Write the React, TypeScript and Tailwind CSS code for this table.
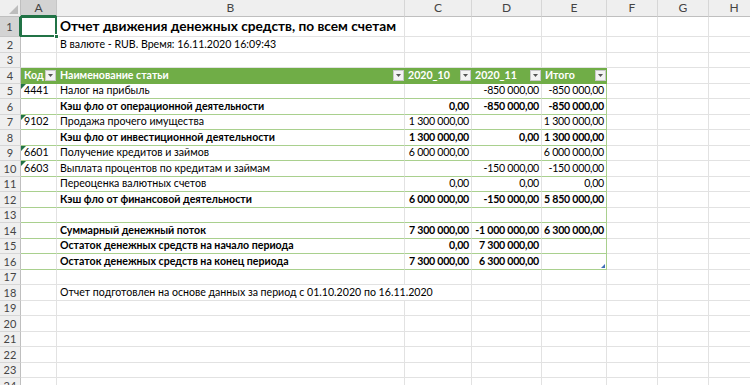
const cols = [
  "w-[36px]",
  "w-[348px]",
  "w-[67px]",
  "w-[70px]",
  "w-[65px]",
  "w-[51px]",
  "w-[51px]",
  "w-[51px]",
];
const letters = ["A", "B", "C", "D", "E", "F", "G", "H"];

interface Line {
  code?: string;
  name?: string;
  c?: string;
  d?: string;
  e?: string;
  bold?: boolean;
}

const lines: Line[] = [
  { code: "4441", name: "Налог на прибыль", d: "-850 000,00", e: "-850 000,00" },
  { name: "Кэш фло от операционной деятельности", c: "0,00", d: "-850 000,00", e: "-850 000,00", bold: true },
  { code: "9102", name: "Продажа прочего имущества", c: "1 300 000,00", e: "1 300 000,00" },
  { name: "Кэш фло от инвестиционной деятельности", c: "1 300 000,00", d: "0,00", e: "1 300 000,00", bold: true },
  { code: "6601", name: "Получение кредитов и займов", c: "6 000 000,00", e: "6 000 000,00" },
  { code: "6603", name: "Выплата процентов по кредитам и займам", d: "-150 000,00", e: "-150 000,00" },
  { name: "Переоценка валютных счетов", c: "0,00", d: "0,00", e: "0,00" },
  { name: "Кэш фло от финансовой деятельности", c: "6 000 000,00", d: "-150 000,00", e: "5 850 000,00", bold: true },
  {},
  { name: "Суммарный денежный поток", c: "7 300 000,00", d: "-1 000 000,00", e: "6 300 000,00", bold: true },
  { name: "Остаток денежных средств на начало периода", c: "0,00", d: "7 300 000,00", bold: true },
  { name: "Остаток денежных средств на конец периода", c: "7 300 000,00", d: "6 300 000,00", bold: true },
];

const RowHead = ({ n, active }: { n: number; active?: boolean }) => (
  <div
    className={
      "w-[21px] shrink-0 flex items-center justify-center border-b border-r text-[11px] text-[#444] " +
      (active
        ? "bg-[#d3d3d3] border-b-[#c6c6c6] border-r-[#217346] border-r-2"
        : "bg-[#efefef] border-b-[#d6d6d6] border-r-[#bfbfbf]")
    }
  >
    {n}
  </div>
);

const Filter = () => (
  <div className="absolute right-[1px] top-[2px] w-[11px] h-[11px] bg-[#f3f3f3] border border-[#c8c8c8] flex items-center justify-center">
    <svg width="5" height="3" viewBox="0 0 5 3">
      <path d="M0 0H5L2.5 3Z" fill="#555" />
    </svg>
  </div>
);

const Tri = () => (
  <div className="absolute left-0 top-0 w-0 h-0 border-t-[5px] border-t-[#217346] border-r-[5px] border-r-transparent" />
);

const Plain = ({ n, h, children }: { n: number; h: string; children?: React.ReactNode[] }) => (
  <div className={"flex " + h}>
    <RowHead n={n} />
    {cols.map((w, i) => (
      <div key={i} className={w + " shrink-0 border-r border-b border-[#e2e2e2] relative"}>
        {children?.[i]}
      </div>
    ))}
  </div>
);

const num = (v?: string, bold?: boolean) => (
  <div
    className={
      "absolute inset-0 flex items-center justify-end pr-[2px] whitespace-nowrap tracking-[-0.25px] " +
      (bold ? "font-bold" : "")
    }
  >
    {v}
  </div>
);

const App = () => {
  return (
    <div
      className="w-[750px] h-[385px] overflow-hidden bg-white text-[10.6px] text-black leading-none"
      style={{ fontFamily: "Lato, 'Liberation Sans', sans-serif" }}
    >
      {/* column headers */}
      <div className="flex h-[17px]">
        <div className="w-[21px] shrink-0 bg-[#efefef] border-r border-b border-[#bfbfbf] relative">
          <div className="absolute right-[2px] bottom-[2px] w-0 h-0 border-l-[9px] border-l-transparent border-b-[9px] border-b-[#bdbdbd]" />
        </div>
        {cols.map((w, i) => (
          <div
            key={i}
            className={
              w +
              " shrink-0 flex items-center justify-center text-[12px] text-[#444] border-r " +
              (i === 0
                ? "bg-[#d3d3d3] border-r-[#c6c6c6] border-b-2 border-b-[#217346]"
                : "bg-[#efefef] border-r-[#d6d6d6] border-b border-b-[#bfbfbf]")
            }
          >
            {letters[i]}
          </div>
        ))}
      </div>

      {/* row 1 */}
      <div className="flex h-[20px]">
        <RowHead n={1} active />
        {cols.map((w, i) => (
          <div key={i} className={w + " shrink-0 border-r border-b border-[#e2e2e2] relative"}>
            {i === 0 && (
              <div className="absolute -left-[1px] -top-[1px] w-[37px] h-[21px] border-2 border-[#217346] z-10">
                <div className="absolute -right-[4px] -bottom-[4px] w-[5px] h-[5px] bg-[#217346] border border-white" />
              </div>
            )}
            {i === 1 && (
              <div className="absolute left-[3px] bottom-[3px] whitespace-nowrap text-[13.7px] font-bold">
                Отчет движения денежных средств, по всем счетам
              </div>
            )}
          </div>
        ))}
      </div>

      <Plain n={2} h="h-[15.5px]">
        {[null, <div key="b" className="absolute left-[3px] inset-y-0 flex items-center whitespace-nowrap">В валюте - RUB. Время: 16.11.2020 16:09:43</div>]}
      </Plain>
      <Plain n={3} h="h-[15.5px]" />

      {/* table header */}
      <div className="flex h-[15.5px]">
        <RowHead n={4} />
        {["Код", "Наименование статьи", "2020_10", "2020_11", "Итого"].map((t, i) => (
          <div
            key={i}
            className={cols[i] + " shrink-0 bg-[#70ad47] text-white font-bold relative flex items-center pl-[3px] border-b border-[#70ad47]"}
          >
            {t}
            <Filter />
          </div>
        ))}
        {cols.slice(5).map((w, i) => (
          <div key={i} className={w + " shrink-0 border-r border-b border-[#e2e2e2]"} />
        ))}
      </div>

      {lines.map((l, r) => (
        <div key={r} className="flex h-[15.5px]">
          <RowHead n={r + 5} />
          <div className={cols[0] + " shrink-0 relative border-r border-r-[#e2e2e2] border-b border-b-[#a9d08e] flex items-center pl-[3px]"}>
            {l.code && <Tri />}
            {l.code}
          </div>
          <div className={cols[1] + " shrink-0 relative border-r border-r-[#e2e2e2] border-b border-b-[#a9d08e] flex items-center pl-[3px] whitespace-nowrap " + (l.bold ? "font-bold" : "")}>
            {l.name}
          </div>
          <div className={cols[2] + " shrink-0 relative border-r border-r-[#e2e2e2] border-b border-b-[#a9d08e]"}>{num(l.c, l.bold)}</div>
          <div className={cols[3] + " shrink-0 relative border-r border-r-[#e2e2e2] border-b border-b-[#a9d08e]"}>{num(l.d, l.bold)}</div>
          <div className={cols[4] + " shrink-0 relative border-r border-r-[#a9d08e] border-b border-b-[#a9d08e]"}>
            {num(l.e, l.bold)}
            {r === lines.length - 1 && (
              <div className="absolute right-[1px] bottom-[1px] w-0 h-0 border-l-[4px] border-l-transparent border-b-[4px] border-b-[#3f6fb6]" />
            )}
          </div>
          {cols.slice(5).map((w, i) => (
            <div key={i} className={w + " shrink-0 border-r border-b border-[#e2e2e2]"} />
          ))}
        </div>
      ))}

      <Plain n={17} h="h-[15.5px]" />

      {/* row 18: text overflows into C */}
      <div className="flex h-[15.5px]">
        <RowHead n={18} />
        <div className={cols[0] + " shrink-0 border-r border-b border-[#e2e2e2]"} />
        <div className="w-[415px] shrink-0 border-r border-b border-[#e2e2e2] flex items-center pl-[3px] whitespace-nowrap">
          Отчет подготовлен на основе данных за период с 01.10.2020 по 16.11.2020
        </div>
        {cols.slice(3).map((w, i) => (
          <div key={i} className={w + " shrink-0 border-r border-b border-[#e2e2e2]"} />
        ))}
      </div>

      {[19, 20, 21, 22, 23, 24].map((n) => (
        <Plain key={n} n={n} h="h-[15.5px]" />
      ))}
    </div>
  );
};

export default App;
